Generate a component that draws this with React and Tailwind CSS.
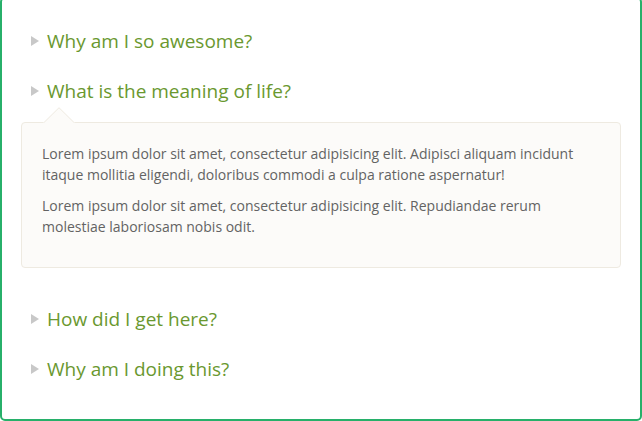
import React from "react";

const Tri = () => (
  <svg width="8" height="10" viewBox="0 0 8 10" className="shrink-0">
    <polygon points="0,0 8,5 0,10" fill="#c8c8c8" />
  </svg>
);

const Heading = ({ children }) => (
  <div className="flex items-center h-[30px] pl-[29px] gap-[8px]">
    <Tri />
    <span className="text-[19px] leading-[30px] text-[#6a982f]">{children}</span>
  </div>
);

export default function App() {
  return (
    <div className="w-[642px] h-[421px] overflow-hidden bg-white" style={{ fontFamily: '"Open Sans", sans-serif' }}>
      <div className="-mt-[3px] h-[424px] border-2 border-[#27b06a] rounded-[5px] pt-[27px] pb-[35px]">
        <Heading>Why am I so awesome?</Heading>
        <div className="h-[20px]" />
        <Heading>What is the meaning of life?</Heading>
        <div className="h-[16px]" />
        <div className="relative mx-[19px] border border-[#eeeae1] bg-[#fcfbf9] rounded-[4px] px-[20px] pt-[20px] pb-[20px] text-[14px] leading-[21px] text-[#636363]">
          <svg width="32" height="16" viewBox="0 0 32 16" className="absolute -top-[16px] left-[21px]">
            <polygon points="0,16 16,0.5 32,16" fill="#fcfbf9" />
            <polyline points="0.5,16 16,0.7 31.5,16" fill="none" stroke="#eeeae1" strokeWidth="1" />
          </svg>
          <p className="mb-[10px]">
            Lorem ipsum dolor sit amet, consectetur adipisicing elit. Adipisci aliquam incidunt itaque mollitia eligendi, doloribus commodi a culpa ratione aspernatur!
          </p>
          <p className="mb-[10px]">
            Lorem ipsum dolor sit amet, consectetur adipisicing elit. Repudiandae rerum molestiae laboriosam nobis odit.
          </p>
        </div>
        <div className="h-[36px]" />
        <Heading>How did I get here?</Heading>
        <div className="h-[20px]" />
        <Heading>Why am I doing this?</Heading>
      </div>
    </div>
  );
}
